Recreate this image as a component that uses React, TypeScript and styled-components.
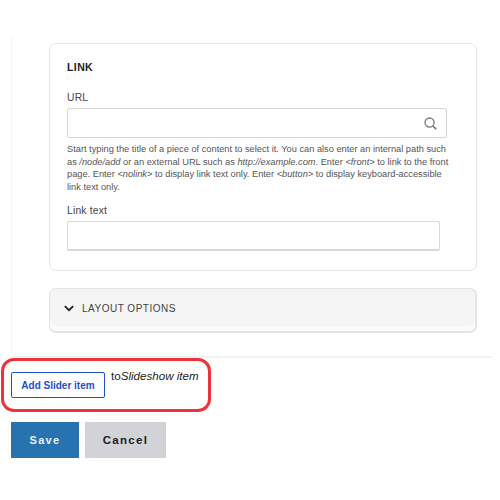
import styled, { createGlobalStyle } from "styled-components"

const GlobalStyle = createGlobalStyle`
  html, body {
    margin: 0;
    padding: 0;
    background: #fff;
    font-family: "Liberation Sans", Arial, sans-serif;
  }
`

export default function App() {
  return (
    <Page>
      <GlobalStyle />
      <Panel>
        <Card>
          <Heading>LINK</Heading>
          <FieldLabel>URL</FieldLabel>
          <SearchBox>
            <svg width="13" height="13" viewBox="0 0 16 16" fill="none" stroke="#7d7d7d" strokeWidth="1.6">
              <circle cx="6.8" cy="6.8" r="5.6" />
              <path d="M10.8 10.8 L15 15" strokeWidth="2.2" />
            </svg>
          </SearchBox>
          <Help>
            Start typing the title of a piece of content to select it. You can also enter an internal path such
            as <em>/node/add</em> or an external URL such as <em>http://example.com</em>. Enter <em>&lt;front&gt;</em> to
            link to the front page. Enter <em>&lt;nolink&gt;</em> to display link text only. Enter{" "}
            <em>&lt;button&gt;</em> to display keyboard-accessible link text only.
          </Help>
          <FieldLabel $spaced>Link text</FieldLabel>
          <TextBox />
        </Card>
        <Accordion>
          <svg width="10" height="7" viewBox="0 0 12 8" fill="none" stroke="#222" strokeWidth="2.2">
            <path d="M1 1.2 L6 6 L11 1.2" />
          </svg>
          <AccordionTitle>LAYOUT OPTIONS</AccordionTitle>
        </Accordion>
      </Panel>
      <AddRow>
        <AddButton>Add Slider item</AddButton>
        <AddTarget>
          to<em>Slideshow item</em>
        </AddTarget>
        <Highlight />
      </AddRow>
      <Actions>
        <SaveButton>Save</SaveButton>
        <CancelButton>Cancel</CancelButton>
      </Actions>
    </Page>
  )
}

const Page = styled.div`
  width: 500px;
  height: 500px;
  overflow: hidden;
  background: #fff;
  padding: 36px 0 0 11px;
  box-sizing: border-box;
`

const Panel = styled.div`
  width: 481px;
  height: 322px;
  box-sizing: border-box;
  padding: 7px 15px 0 37px;
  margin-bottom: 14px;
  border-left: 1px solid #f6f6f6;
  border-bottom: 2px solid #f3f3f3;
`

const Card = styled.div`
  width: 428px;
  height: 228px;
  box-sizing: border-box;
  padding: 17px 17px 0;
  margin-bottom: 17px;
  border: 1px solid #e6e6e6;
  border-radius: 7px;
  background: #fff;
`

const Heading = styled.div`
  font-size: 10.5px;
  line-height: 13px;
  font-weight: 700;
  letter-spacing: 0.4px;
  color: #222;
  margin-bottom: 17px;
`

const FieldLabel = styled.div<{ $spaced?: boolean }>`
  font-size: 10.3px;
  line-height: 13px;
  letter-spacing: 0.2px;
  color: #444;
  margin-top: ${(p) => (p.$spaced ? "11px" : "0")};
  margin-bottom: 4px;
`

const SearchBox = styled.div`
  width: 380px;
  height: 30px;
  box-sizing: border-box;
  display: flex;
  align-items: center;
  justify-content: flex-end;
  padding-right: 9px;
  border: 1px solid #d5d5d5;
  border-radius: 2px;
  background: #fff;
`

const Help = styled.div`
  width: 382px;
  margin-top: 5px;
  font-size: 9.25px;
  line-height: 12.6px;
  color: #555;
`

const TextBox = styled.div`
  width: 373px;
  height: 30px;
  box-sizing: border-box;
  border: 1px solid #d8d8d8;
  border-bottom-width: 2px;
  border-radius: 2px;
  background: #fff;
`

const Accordion = styled.div`
  width: 428px;
  height: 45px;
  box-sizing: border-box;
  display: flex;
  align-items: center;
  gap: 8px;
  padding: 0 0 3px 14px;
  border: 1px solid #e4e4e4;
  border-right-width: 2px;
  border-bottom-width: 2px;
  border-radius: 7px;
  background: #f5f5f5;
  box-shadow: inset 0 -5px 0 #fbfbfb;
`

const AccordionTitle = styled.span`
  font-size: 10px;
  letter-spacing: 0.5px;
  color: #444;
`

const AddRow = styled.div`
  position: relative;
  display: flex;
  align-items: flex-start;
  gap: 6px;
  height: 26px;
  margin-bottom: 24px;
`

const AddButton = styled.div`
  width: 94px;
  height: 26px;
  box-sizing: border-box;
  display: flex;
  align-items: center;
  justify-content: center;
  border: 1.5px solid #1d4fd0;
  border-radius: 2px;
  background: #fff;
  color: #1d4fd0;
  font-size: 10px;
  font-weight: 700;
`

const AddTarget = styled.div`
  margin-top: -3px;
  font-size: 11.6px;
  line-height: 13px;
  color: #222;
`

const Highlight = styled.div`
  position: absolute;
  left: -10px;
  top: -14px;
  width: 210px;
  height: 54px;
  box-sizing: border-box;
  border: 3px solid #ec3338;
  border-radius: 13px;
`

const Actions = styled.div`
  display: flex;
  gap: 6px;
`

const SaveButton = styled.div`
  width: 68px;
  height: 36px;
  display: flex;
  align-items: center;
  justify-content: center;
  background: #2673b0;
  color: #e9f0f6;
  font-size: 11px;
  font-weight: 700;
  letter-spacing: 1.3px;
`

const CancelButton = styled.div`
  width: 81px;
  height: 36px;
  display: flex;
  align-items: center;
  justify-content: center;
  background: #d2d3d7;
  color: #1c1c1f;
  font-size: 11.5px;
  font-weight: 700;
  letter-spacing: 1.3px;
`
